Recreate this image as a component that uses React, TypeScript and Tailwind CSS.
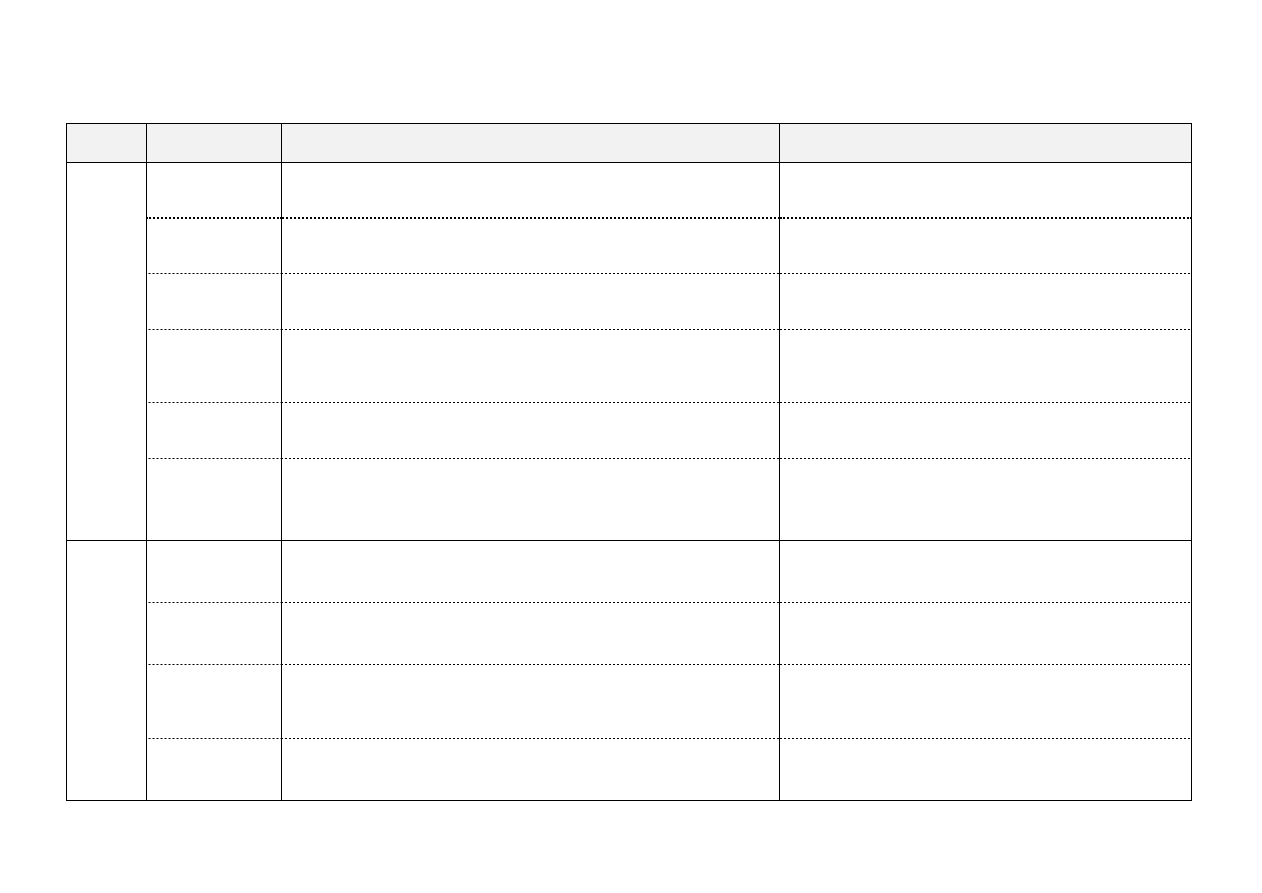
const groupA = [55, 56, 56, 73, 56, 82]
const groupB = [62, 62, 74, 62]

function Group({ heights }: { heights: number[] }) {
  return (
    <>
      {heights.map((h, i) => {
        const last = i === heights.length - 1
        const sep = last
          ? "border-b border-b-black"
          : i === 0 && heights.length === 6
            ? "border-b-2 border-b-black [border-bottom-style:dotted]"
            : "border-b-0 bg-[linear-gradient(to_right,#000_50%,transparent_50%)] bg-[length:4px_1px] bg-repeat-x bg-bottom"
        return (
          <tr key={i} style={{ height: h }}>
            {i === 0 && (
              <td rowSpan={heights.length} className="border border-black" />
            )}
            <td className={`border-x border-x-black ${sep}`} />
            <td className={`border-x border-x-black ${sep}`} />
            <td className={`border-x border-x-black ${sep}`} />
          </tr>
        )
      })}
    </>
  )
}

export default function App() {
  return (
    <div className="min-h-screen bg-white pt-[123px] pl-[66px] font-['Liberation_Sans',sans-serif]">
      <table className="table-fixed border-collapse w-[1125px]">
        <colgroup>
          <col className="w-[80px]" />
          <col className="w-[135px]" />
          <col className="w-[498px]" />
          <col className="w-[412px]" />
        </colgroup>
        <thead>
          <tr className="h-[39px] bg-[#f2f2f2]">
            <th className="border border-black" />
            <th className="border border-black" />
            <th className="border border-black" />
            <th className="border border-black" />
          </tr>
        </thead>
        <tbody>
          <Group heights={groupA} />
          <Group heights={groupB} />
        </tbody>
      </table>
    </div>
  )
}
